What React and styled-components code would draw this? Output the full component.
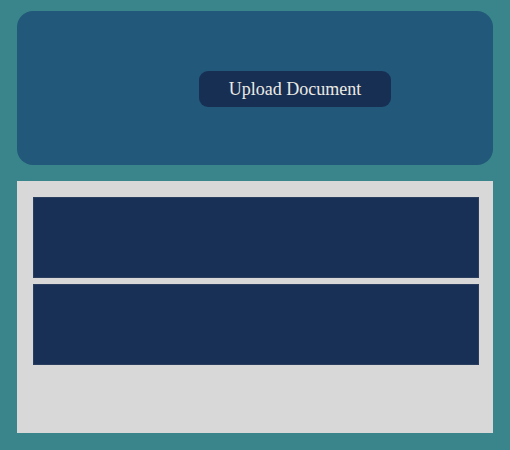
import React from 'react';
import styled, { createGlobalStyle } from 'styled-components';

const GlobalStyle = createGlobalStyle`
    html, body {
        margin: 0;
        padding: 0;
        background-color: #3a858b;
    }
`;

const StyledPage = styled.div`
    display: flex;
    flex-direction: column;
    gap: 16px;
    padding: 11px 17px 17px;
    min-height: 450px;
    box-sizing: border-box;
`;

const StyledUploadPanel = styled.div`
    display: flex;
    justify-content: center;
    align-items: center;
    height: 154px;
    padding: 2px 0 0 80px;
    box-sizing: border-box;
    border-radius: 16px;
    background-color: #22587a;
`;

const StyledButton = styled.button`
    width: 192px;
    height: 36px;
    border: none;
    border-radius: 9px;
    background-color: #182f54;
    color: #ecebe4;
    font-family: "Liberation Serif", "DejaVu Serif", serif;
    font-size: 18px;
    padding: 0;
    :hover {
        cursor: pointer;
    }
`;

const StyledList = styled.div`
    display: flex;
    flex-direction: column;
    gap: 6px;
    height: 252px;
    padding: 16px 14px 16px 16px;
    box-sizing: border-box;
    background-color: #d8d8d8;
`;

const StyledCard = styled.div`
    height: 81px;
    box-sizing: border-box;
    border: 1px solid #2a3f60;
    background-color: #183055;
`;

const cards = [1, 2];

const App = () => {
    return (
        <>
            <GlobalStyle />
            <StyledPage>
                <StyledUploadPanel>
                    <StyledButton type="button">Upload Document</StyledButton>
                </StyledUploadPanel>
                <StyledList>
                    {cards.map(id => (
                        <StyledCard key={id} />
                    ))}
                </StyledList>
            </StyledPage>
        </>
    );
};

export default App;
